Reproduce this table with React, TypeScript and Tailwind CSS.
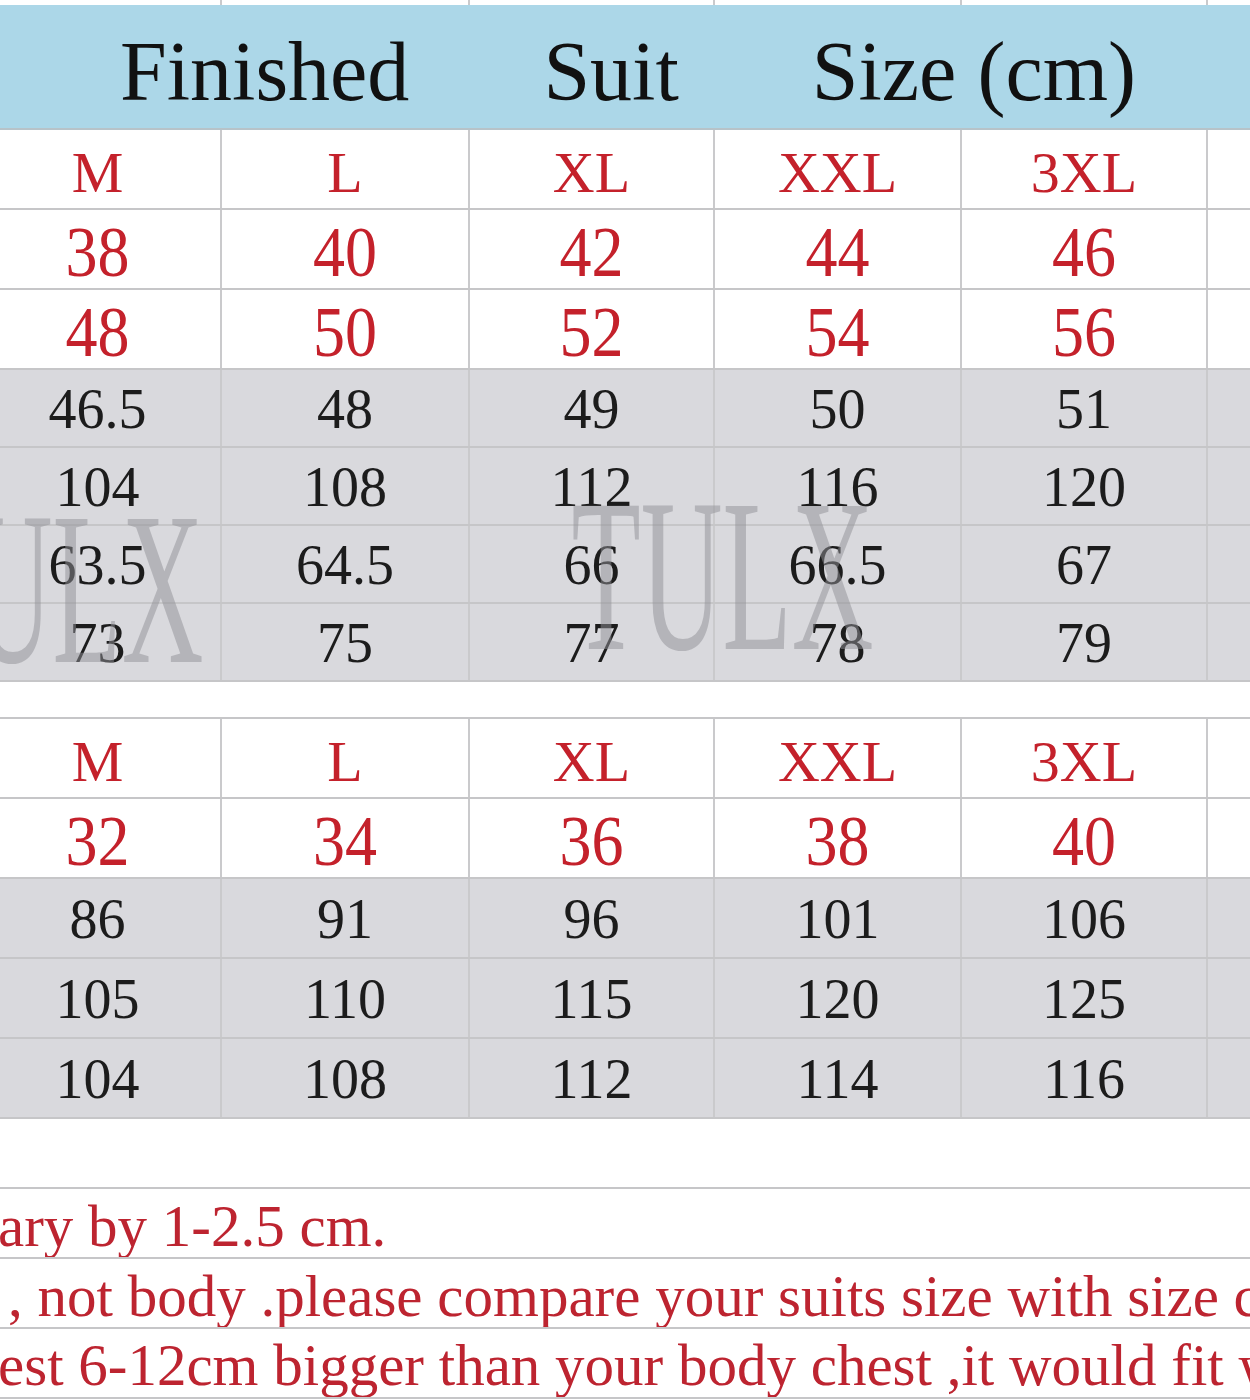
import React from 'react';

const serif = { fontFamily: '"Liberation Serif", "Times New Roman", serif' };

const topSizes = ['M', 'L', 'XL', 'XXL', '3XL', ''];
const topRed = [
  ['38', '40', '42', '44', '46', ''],
  ['48', '50', '52', '54', '56', ''],
];
const topGray = [
  ['46.5', '48', '49', '50', '51', ''],
  ['104', '108', '112', '116', '120', ''],
  ['63.5', '64.5', '66', '66.5', '67', ''],
  ['73', '75', '77', '78', '79', ''],
];
const pantsRed = [['32', '34', '36', '38', '40', '']];
const pantsGray = [
  ['86', '91', '96', '101', '106', ''],
  ['105', '110', '115', '120', '125', ''],
  ['104', '108', '112', '114', '116', ''],
];

const cols = 'grid grid-cols-[247px_248px_245px_247px_246px_247px] -ml-[25px] w-[1480px]';

const Row = ({
  cells,
  kind,
  height = 'h-[80px]',
}: {
  cells: string[];
  kind: 'size' | 'red' | 'gray';
  height?: string;
}) => (
  <div
    className={`${cols} ${height} border-b-2 border-[#c6c6c8] ${
      kind === 'gray' ? 'bg-[#d9d9dd]' : 'bg-white'
    }`}
  >
    {cells.map((c, i) => (
      <div
        key={i}
        className={`flex items-center justify-center border-r-2 border-[#cacacc] leading-none ${
          kind === 'size'
            ? 'text-[58px] text-[#c4212b] pt-[8px]'
            : kind === 'red'
            ? 'text-[64px] text-[#c4212b] pt-[5px]'
            : 'text-[56px] text-[#1c1c1c] pt-[2px]'
        }`}
      >
        <span className={kind === 'red' ? 'scale-y-[1.12]' : ''}>{c}</span>
      </div>
    ))}
  </div>
);

const Note = ({ text, indent }: { text: string; indent: string }) => (
  <div className="h-[70px] border-b-2 border-[#c6c6c8] overflow-hidden flex items-center">
    <span className={`whitespace-nowrap text-[59px] leading-none text-[#bd2430] ${indent}`}>{text}</span>
  </div>
);

export default function App() {
  return (
    <div className="relative w-[1250px] h-[1400px] overflow-hidden bg-white" style={serif}>
      {/* top strip of the cells above */}
      <div className={`${cols} h-[5px] bg-white`}>
        {topSizes.map((_, i) => (
          <div key={i} className="border-r-2 border-[#cacacc]" />
        ))}
      </div>

      {/* header */}
      <div className="h-[125px] bg-[#acd7e8] border-b-2 border-[#b7c3c9] flex items-center pl-[120px] pt-[10px] text-[84px] leading-none text-[#111]">
        <span>Finished</span>
        <span className="ml-[134px]">Suit</span>
        <span className="ml-[133px]">Size (cm)</span>
      </div>

      <Row cells={topSizes} kind="size" />
      {topRed.map((r, i) => (
        <Row key={i} cells={r} kind="red" />
      ))}
      {topGray.map((r, i) => (
        <Row key={i} cells={r} kind="gray" height="h-[78px]" />
      ))}

      <div className="h-[37px] bg-white border-b-2 border-[#c6c6c8]" />

      <Row cells={topSizes} kind="size" />
      {pantsRed.map((r, i) => (
        <Row key={i} cells={r} kind="red" />
      ))}
      {pantsGray.map((r, i) => (
        <Row key={i} cells={r} kind="gray" />
      ))}

      <div className="h-[70px] bg-white border-b-2 border-[#c6c6c8]" />

      <Note text="ary by 1-2.5 cm." indent="-ml-[2px] pt-[6px]" />
      <Note text=", not body .please compare your suits size with size chart" indent="ml-[8px] pt-[6px]" />
      <Note text="est 6-12cm bigger than your body chest ,it would fit well" indent="-ml-[2px] pt-[4px]" />

      {/* watermarks */}
      <div className="absolute left-[-95px] top-[480px] w-[295px] flex justify-center pointer-events-none">
        <span className="text-[218px] leading-none text-[#8f8f95]/50 scale-x-[0.52] whitespace-nowrap">TULX</span>
      </div>
      <div className="absolute left-[575px] top-[467px] w-[295px] flex justify-center pointer-events-none">
        <span className="text-[218px] leading-none text-[#8f8f95]/50 scale-x-[0.52] whitespace-nowrap">TULX</span>
      </div>
    </div>
  );
}
